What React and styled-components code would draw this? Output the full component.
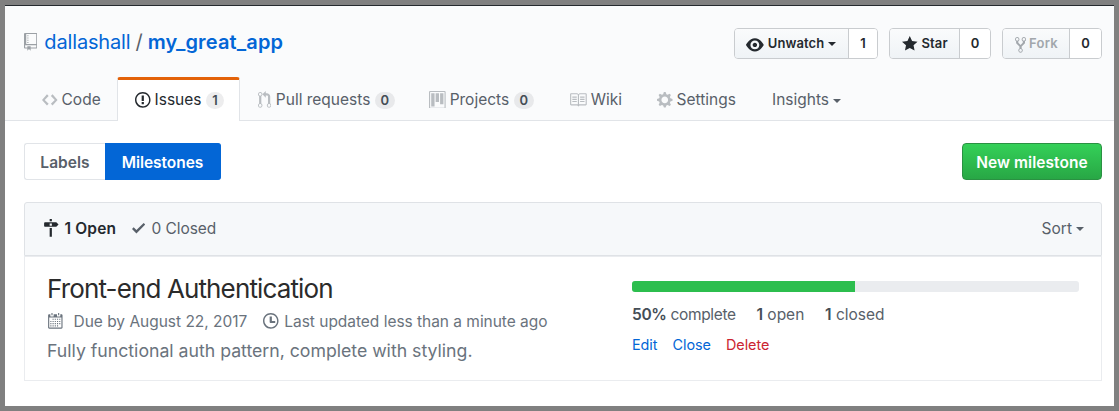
import React from 'react';
import styled, { createGlobalStyle } from 'styled-components';

const Global = createGlobalStyle`
  * { box-sizing: border-box; }
  body { margin: 0; background: #808080; font-family: Inter, "Liberation Sans", sans-serif; }
`;

const icons = {
  repo: [12, 'M4 9H3V8h1v1zm0-3H3v1h1V6zm0-2H3v1h1V4zm0-2H3v1h1V2zm8-1v12c0 .55-.45 1-1 1H6v2l-1.5-1.5L3 16v-2H1c-.55 0-1-.45-1-1V1c0-.55.45-1 1-1h10c.55 0 1 .45 1 1zm-1 10H1v2h2v-1h3v1h5v-2zm0-10H2v9h9V1z'],
  code: [14, 'M9.5 3L8 4.5 11.5 8 8 11.5 9.5 13 14 8 9.5 3zm-5 0L0 8l4.5 5L6 11.5 2.5 8 6 4.5 4.5 3z'],
  issue: [14, 'M7 2.3c3.14 0 5.7 2.56 5.7 5.7s-2.56 5.7-5.7 5.7A5.71 5.71 0 0 1 1.3 8c0-3.14 2.56-5.7 5.7-5.7zM7 1C3.14 1 0 4.14 0 8s3.14 7 7 7 7-3.14 7-7-3.14-7-7-7zm1 3H6v5h2V4zm0 6H6v2h2v-2z'],
  pull: [12, 'M11 11.28V5c-.03-.78-.34-1.47-.94-2.06C9.46 2.35 8.78 2.03 8 2H7V0L4 3l3 3V4h1c.27.02.48.11.69.31.21.2.3.42.31.69v6.28A1.993 1.993 0 0 0 10 15a1.993 1.993 0 0 0 1-3.72zm-1 2.92c-.66 0-1.2-.55-1.2-1.2 0-.65.55-1.2 1.2-1.2.65 0 1.2.55 1.2 1.2 0 .65-.55 1.2-1.2 1.2zM4 3c0-1.11-.89-2-2-2a1.993 1.993 0 0 0-1 3.72v6.56A1.993 1.993 0 0 0 2 15a1.993 1.993 0 0 0 1-3.72V4.72c.59-.34 1-.98 1-1.72zm-.8 10c0 .66-.55 1.2-1.2 1.2-.65 0-1.2-.55-1.2-1.2 0-.65.55-1.2 1.2-1.2.65 0 1.2.55 1.2 1.2zM2 4.2C1.34 4.2.8 3.65.8 3c0-.65.55-1.2 1.2-1.2.65 0 1.2.55 1.2 1.2 0 .65-.55 1.2-1.2 1.2z'],
  project: [15, 'M10 12h3V2h-3v10zm-4-2h3V2H6v8zm-4 4h3V2H2v12zm-1 1h13V1H1v14zM14 0H1a1 1 0 0 0-1 1v14a1 1 0 0 0 1 1h13a1 1 0 0 0 1-1V1a1 1 0 0 0-1-1z'],
  book: [16, 'M3 5h4v1H3V5zm0 3h4V7H3v1zm0 2h4V9H3v1zm11-5h-4v1h4V5zm0 2h-4v1h4V7zm0 2h-4v1h4V9zm2-6v9c0 .55-.45 1-1 1H9.5l-1 1-1-1H2c-.55 0-1-.45-1-1V3c0-.55.45-1 1-1h5.5l1 1 1-1H15c.55 0 1 .45 1 1zm-8 .5L7.5 3H2v9h6V3.5zm7-.5H9.5l-.5.5V12h6V3z'],
  gear: [14, 'M14 8.77v-1.6l-1.94-.64-.45-1.09.88-1.84-1.13-1.13-1.81.91-1.09-.45-.69-1.92h-1.6l-.63 1.94-1.11.45-1.84-.88-1.13 1.13.91 1.81-.45 1.09L0 7.23v1.59l1.94.64.45 1.09-.88 1.84 1.13 1.13 1.81-.91 1.09.45.69 1.92h1.59l.63-1.94 1.11-.45 1.84.88 1.13-1.13-.92-1.81.47-1.09L14 8.75v.02zM7 11c-1.66 0-3-1.34-3-3s1.34-3 3-3 3 1.34 3 3-1.34 3-3 3z'],
  eye: [16, 'M8.06 2C3 2 0 8 0 8s3 6 8.06 6C13 14 16 8 16 8s-3-6-7.94-6zM8 12c-2.2 0-4-1.78-4-4 0-2.2 1.8-4 4-4 2.22 0 4 1.8 4 4 0 2.22-1.78 4-4 4zm2-4c0 1.11-.89 2-2 2-1.11 0-2-.89-2-2 0-1.11.89-2 2-2 1.11 0 2 .89 2 2z'],
  star: [14, 'M14 6l-4.9-.64L7 1 4.9 5.36 0 6l3.6 3.26L2.67 14 7 11.67 11.33 14l-.93-4.74z'],
  fork: [10, 'M8 1a1.993 1.993 0 0 0-1 3.72V6L5 8 3 6V4.72A1.993 1.993 0 0 0 2 1a1.993 1.993 0 0 0-1 3.72V6.5l3 3v1.78A1.993 1.993 0 0 0 5 15a1.993 1.993 0 0 0 1-3.72V9.5l3-3V4.72A1.993 1.993 0 0 0 8 1zM2 4.2C1.34 4.2.8 3.65.8 3c0-.65.55-1.2 1.2-1.2.65 0 1.2.55 1.2 1.2 0 .65-.55 1.2-1.2 1.2zm3 10c-.66 0-1.2-.55-1.2-1.2 0-.65.55-1.2 1.2-1.2.65 0 1.2.55 1.2 1.2 0 .65-.55 1.2-1.2 1.2zm3-10c-.66 0-1.2-.55-1.2-1.2 0-.65.55-1.2 1.2-1.2.65 0 1.2.55 1.2 1.2 0 .65-.55 1.2-1.2 1.2z'],
  milestone: [14, 'M8 2H6V0h2v2zm4 5H2c-.55 0-1-.45-1-1V4c0-.55.45-1 1-1h10l2 2-2 2zM8 4H6v2h2V4zM6 16h2V8H6v8z'],
  check: [12, 'M12 5l-8 8-4-4 1.5-1.5L4 10l6.5-6.5z'],
  calendar: [14, 'M13 2h-1v1.5c0 .28-.22.5-.5.5h-2c-.28 0-.5-.22-.5-.5V2H6v1.5c0 .28-.22.5-.5.5h-2c-.28 0-.5-.22-.5-.5V2H2c-.55 0-1 .45-1 1v11c0 .55.45 1 1 1h11c.55 0 1-.45 1-1V3c0-.55-.45-1-1-1zm0 12H2V5h11v9zM5 3H4V1h1v2zm6 0h-1V1h1v2zM5 6h1v1H5zM7 6h1v1H7zM9 6h1v1H9zM11 6h1v1h-1zM3 8h1v1H3zM5 8h1v1H5zM7 8h1v1H7zM9 8h1v1H9zM11 8h1v1h-1zM3 10h1v1H3zM5 10h1v1H5zM7 10h1v1H7zM9 10h1v1H9zM11 10h1v1h-1zM3 12h1v1H3zM5 12h1v1H5zM7 12h1v1H7zM9 12h1v1H9z'],
  clock: [14, 'M8 8h3v2H7c-.55 0-1-.45-1-1V4h2v4zM7 2.3c3.14 0 5.7 2.56 5.7 5.7s-2.56 5.7-5.7 5.7A5.71 5.71 0 0 1 1.3 8c0-3.14 2.56-5.7 5.7-5.7zM7 1C3.14 1 0 4.14 0 8s3.14 7 7 7 7-3.14 7-7-3.14-7-7-7z'],
};

const Svg = styled.svg`
  display: block;
  flex: none;
  fill: ${p => p.$color || 'currentColor'};
  margin: ${p => p.$margin || 0};
`;
const Icon = ({ name, color, margin }) => {
  const [w, d] = icons[name];
  return (
    <Svg width={w * 1.11} height={17.76} viewBox={`0 0 ${w} 16`} fillRule="evenodd" $color={color} $margin={margin}>
      <path d={d} />
    </Svg>
  );
};

const Page = styled.div`
  width: 1119px;
  height: 411px;
  border: 5px solid #808080;
  background: #fff;
`;
const Header = styled.header`
  height: 116px;
  display: flex;
  flex-direction: column;
  justify-content: space-between;
  background: #fafbfc;
  border-top: 1px solid #24292e;
  border-bottom: 1px solid #e1e4e8;
`;
const TitleRow = styled.div`
  display: flex;
  justify-content: space-between;
  padding: 22px 12px 0 19px;
`;
const RepoTitle = styled.h1`
  display: flex;
  align-items: center;
  margin: 0;
  height: 28px;
  font-size: 20px;
  font-weight: 400;
  white-space: pre;
  color: #586069;
`;
const RepoLink = styled.a`
  color: #0366d6;
  font-weight: ${p => (p.$strong ? 600 : 400)};
  letter-spacing: ${p => p.$ls}px;
`;
const Slash = styled.span`
  margin: 0 5px;
`;
const Actions = styled.div`
  display: flex;
  gap: 11px;
`;
const Action = styled.div`
  display: flex;
  height: 31px;
  border: 1px solid #c9cccf;
  border-radius: 4px;
  overflow: hidden;
  font-size: 13px;
  font-weight: 600;
  line-height: 29px;
  color: #24292e;
`;
const ActionButton = styled.button`
  display: flex;
  align-items: center;
  width: ${p => p.$w}px;
  padding: 0 0 0 11px;
  border: 0;
  border-right: 1px solid #c9cccf;
  background: linear-gradient(#fafbfc, #eff3f6);
  font: inherit;
  letter-spacing: ${p => p.$ls || 0}px;
  color: ${p => (p.$muted ? '#a2a7ac' : 'inherit')};
`;
const ActionCount = styled.span`
  width: ${p => p.$w}px;
  text-align: center;
  background: #fff;
`;
const Caret = styled.span`
  border: 4.5px solid transparent;
  border-top-color: currentColor;
  border-bottom: 0;
  margin-left: 4px;
  margin-top: ${p => p.$top || 0}px;
`;
const Tabs = styled.nav`
  display: flex;
  padding-left: 19px;
  margin-bottom: -1px;
`;
const Tab = styled.a`
  display: flex;
  align-items: center;
  width: ${p => p.$w}px;
  height: 44px;
  padding: 0 0 2px 17px;
  border: 1px solid ${p => (p.$active ? '#e1e4e8' : 'transparent')};
  border-top: 3px solid ${p => (p.$active ? '#e36209' : 'transparent')};
  border-bottom: 0;
  border-radius: 3px 3px 0 0;
  background: ${p => (p.$active ? '#fff' : 'transparent')};
  font-size: 15.5px;
  letter-spacing: ${p => p.$ls || 0}px;
  white-space: nowrap;
  color: ${p => (p.$active ? '#24292e' : '#586069')};
`;
const Counter = styled.span`
  margin-left: 4.5px;
  margin-top: 1px;
  width: ${p => p.$w || 20}px;
  border-radius: 20px;
  background: rgba(27, 31, 35, 0.08);
  color: #444d56;
  font-size: 13px;
  font-weight: 600;
  line-height: 17px;
  letter-spacing: 0;
  text-align: center;
`;
const Main = styled.main`
  padding: 22px 12px 0 19px;
`;
const SubNav = styled.div`
  display: flex;
  justify-content: space-between;
  height: 37px;
  font-size: 15.5px;
  font-weight: 600;
`;
const Switcher = styled.div`
  display: flex;
`;
const SwitchItem = styled.a`
  width: ${p => p.$w}px;
  border: 1px solid ${p => (p.$active ? '#0366d6' : '#e1e4e8')};
  border-${p => (p.$active ? 'left' : 'right')}: 0;
  border-radius: ${p => (p.$active ? '0 3px 3px 0' : '3px 0 0 3px')};
  background: ${p => (p.$active ? '#0366d6' : '#fff')};
  color: ${p => (p.$active ? '#fff' : '#586069')};
  letter-spacing: ${p => p.$ls}px;
  line-height: 37px;
  text-align: center;
`;
const NewButton = styled.button`
  width: 140px;
  padding: 2px 0 0;
  border: 1px solid #2a9142;
  border-radius: 4px;
  background: linear-gradient(#34d058, #28a745);
  color: #fff;
  font: inherit;
  line-height: 33px;
  letter-spacing: 0.05px;
`;
const Panel = styled.section`
  margin-top: 22px;
`;
const PanelHead = styled.div`
  display: flex;
  align-items: center;
  height: 54px;
  padding: 0 17px 2px 18px;
  border: 1px solid #dfe2e6;
  border-radius: 3px 3px 0 0;
  background: #f6f8fa;
  color: #586069;
  font-size: 15.5px;
`;
const Filter = styled.a`
  display: flex;
  align-items: center;
  letter-spacing: ${p => p.$ls || 0}px;
  font-weight: ${p => (p.$active ? 600 : 400)};
  color: ${p => (p.$active ? '#24292e' : '#586069')};
  margin-right: 16px;
`;
const Sort = styled.span`
  display: flex;
  align-items: center;
  margin-left: auto;
`;
const Row = styled.article`
  display: flex;
  justify-content: space-between;
  height: 125px;
  padding: 0 22px;
  border: 1px solid #eaecef;
`;
const Name = styled.h2`
  margin: 16px 0 0;
  font-size: 26px;
  font-weight: 400;
  line-height: 32px;
  letter-spacing: -0.87px;
  color: #2b2b2b;
`;
const Meta = styled.div`
  display: flex;
  align-items: center;
  height: 20px;
  margin-top: 6px;
  font-size: 15.5px;
  color: #6a737d;
`;
const MetaText = styled.span`
  letter-spacing: ${p => p.$ls}px;
`;
const Description = styled.p`
  margin: 8px 0 0;
  font-size: 17.7px;
  line-height: 24px;
  letter-spacing: -0.01px;
  color: #6a737d;
`;
const Progress = styled.div`
  width: 447px;
`;
const Track = styled.div`
  height: 11px;
  margin-top: 24px;
  border-radius: 3px;
  overflow: hidden;
  background: #eaecef;
`;
const Fill = styled.div`
  height: 100%;
  width: 49.9%;
  background: #2cbe4e;
`;
const Stats = styled.div`
  display: flex;
  gap: 20.8px;
  margin-top: 13px;
  font-size: 15.5px;
  line-height: 20px;
  color: #586069;
  b { font-weight: 600; color: #444d56; }
`;
const Stat = styled.span`
  letter-spacing: ${p => p.$ls}px;
`;
const Links = styled.div`
  display: flex;
  gap: 15.2px;
  margin-top: 10px;
  font-size: 14.4px;
  line-height: 20px;
  letter-spacing: -0.07px;
`;
const Link = styled.a`
  color: ${p => (p.$danger ? '#cb2431' : '#0366d6')};
`;

const tint = '#b9bdc1';

export default function App() {
  return (
    <>
      <Global />
      <Page>
        <Header>
          <TitleRow>
            <RepoTitle>
              <Icon name="repo" color="#9ba0a5" margin="0 7px 0 0" />
              <RepoLink $ls={-0.15}>dallashall</RepoLink>
              <Slash>/</Slash>
              <RepoLink $strong $ls={0.15}>my_great_app</RepoLink>
            </RepoTitle>
            <Actions>
              <Action>
                <ActionButton $w={114} $ls={0.1}><Icon name="eye" margin="2px 4px 0 0" />Unwatch<Caret /></ActionButton>
                <ActionCount $w={28}>1</ActionCount>
              </Action>
              <Action>
                <ActionButton $w={70} $ls={0.1}><Icon name="star" margin="0 4px 0 1px" />Star</ActionButton>
                <ActionCount $w={30}>0</ActionCount>
              </Action>
              <Action>
                <ActionButton $w={67} $ls={0.2} $muted><Icon name="fork" margin="2px 3px 0 1px" />Fork</ActionButton>
                <ActionCount $w={31}>0</ActionCount>
              </Action>
            </Actions>
          </TitleRow>
          <Tabs>
            <Tab $w={93}><Icon name="code" color={tint} margin="0 4px 0 0" />Code</Tab>
            <Tab $w={123} $active><Icon name="issue" margin="0 4px 0 0" />Issues<Counter $w={18}>1</Counter></Tab>
            <Tab $w={171}><Icon name="pull" color={tint} margin="0 4.5px 0 0" />Pull requests<Counter>0</Counter></Tab>
            <Tab $w={140}><Icon name="project" color={tint} margin="0 4px 0 0" />Projects<Counter>0</Counter></Tab>
            <Tab $w={88}><Icon name="book" color={tint} margin="0 4px 0 0" />Wiki</Tab>
            <Tab $w={115}><Icon name="gear" color={tint} margin="0 4px 0 0" />Settings</Tab>
            <Tab $w={104}>Insights<Caret $top={2} /></Tab>
          </Tabs>
        </Header>
        <Main>
          <SubNav>
            <Switcher>
              <SwitchItem $w={81} $ls={0.05}>Labels</SwitchItem>
              <SwitchItem $w={116} $ls={-0.05} $active>Milestones</SwitchItem>
            </Switcher>
            <NewButton>New milestone</NewButton>
          </SubNav>
          <Panel>
            <PanelHead>
              <Filter $active $ls={0.15}><Icon name="milestone" margin="0 6px 0 0" />1 Open</Filter>
              <Filter $ls={-0.05}><Icon name="check" margin="0 6px 0 0" />0 Closed</Filter>
              <Sort>Sort<Caret $top={2} /></Sort>
            </PanelHead>
            <Row>
              <div>
                <Name>Front-end Authentication</Name>
                <Meta>
                  <Icon name="calendar" margin="0 11px 0 0" />
                  <MetaText $ls={-0.02}>Due by August 22, 2017</MetaText>
                  <Icon name="clock" margin="0 5.5px 0 16px" />
                  <MetaText $ls={-0.03}>Last updated less than a minute ago</MetaText>
                </Meta>
                <Description>Fully functional auth pattern, complete with styling.</Description>
              </div>
              <Progress>
                <Track><Fill /></Track>
                <Stats>
                  <Stat $ls={-0.35}><b>50%</b> complete</Stat>
                  <Stat $ls={-0.02}><b>1</b> open</Stat>
                  <Stat $ls={-0.02}><b>1</b> closed</Stat>
                </Stats>
                <Links>
                  <Link>Edit</Link>
                  <Link>Close</Link>
                  <Link $danger>Delete</Link>
                </Links>
              </Progress>
            </Row>
          </Panel>
        </Main>
      </Page>
    </>
  );
}
